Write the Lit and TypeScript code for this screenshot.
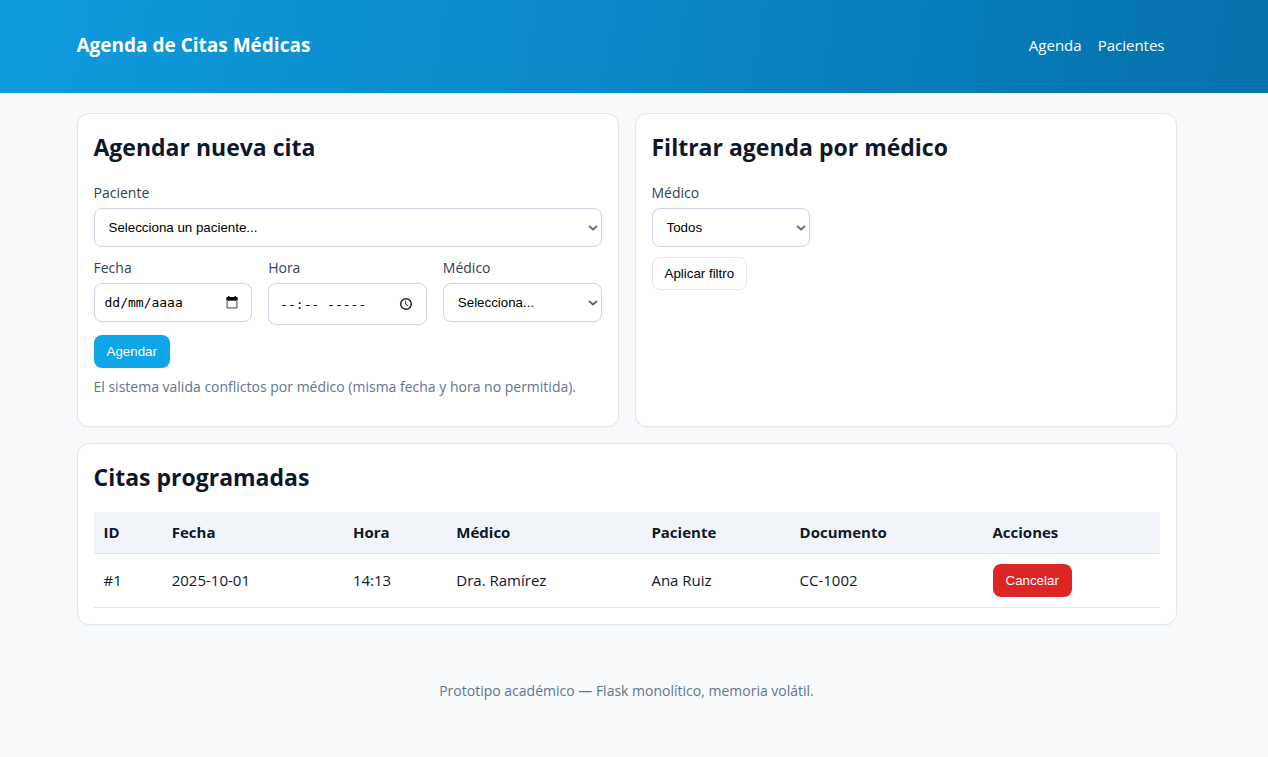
import { LitElement, html, css, svg } from "lit";
import { customElement } from "lit/decorators.js";

interface Cita {
  id: number;
  fecha: string;
  hora: string;
  medico: string;
  paciente: string;
  documento: string;
}

const CITAS: Cita[] = [
  { id: 1, fecha: "2025-10-01", hora: "14:13", medico: "Dra. Ramírez", paciente: "Ana Ruiz", documento: "CC-1002" },
];

const calendarIcon = svg`<svg viewBox="0 0 12 14" width="12" height="14" aria-hidden="true">
  <path fill="#666" fill-rule="evenodd" d="M.5 2h11v10.500H.5zM1.700 5v6.300h8.600V5z"/>
  <path fill="#000" d="M2 0h1.300v1h5.400V0H10v1h1c.4 0 .7.300.7.700V4H.3V1.700C.3 1.300.6 1 1 1h1z"/>
</svg>`;

const clockIcon = svg`<svg viewBox="0 0 14 14" width="14" height="14" aria-hidden="true">
  <circle cx="7" cy="7" r="5.300" fill="none" stroke="#222" stroke-width="1.500"/>
  <path d="M6.700 3.800v3.500l2.300 1.500" fill="none" stroke="#222" stroke-width="1"/>
</svg>`;

@customElement("app-root")
export class AppRoot extends LitElement {
  static styles = css`
    :host {
      display: block;
      min-height: 100vh;
      background: #f8fafc;
      color: #0f172a;
      font: 15px/22px "Segoe UI", "Open Sans", "Noto Sans", sans-serif;
    }
    *, *::before, *::after { box-sizing: border-box; }
    .header {
      background: linear-gradient(100deg, #0e9cdf, #0571ab);
      color: #fff;
      padding: 22px 15px 26px 0;
    }
    .bar {
      max-width: 1100px;
      min-height: 45px;
      margin: 0 auto;
      display: flex;
      align-items: center;
      justify-content: space-between;
    }
    .title { margin: 0; font-size: 19px; line-height: 28px; font-weight: 700; }
    .nav { display: flex; gap: 16px; padding-right: 12px; }
    .nav a { color: #fff; text-decoration: none; }
    .page { padding: 20px 15px 0 0; }
    .wrap {
      max-width: 1100px;
      margin: 0 auto;
      display: grid;
      grid-template-columns: 1fr 1fr;
      gap: 16px;
    }
    .card {
      min-width: 0;
      background: #fff;
      border: 1px solid #e2e8f0;
      border-radius: 12px;
      padding: 16px;
      box-shadow: 0 1px 2px rgba(0, 0, 0, 0.04);
    }
    .wide { grid-column: 1 / -1; }
    h2 { margin: 0 0 18px; font-size: 23px; line-height: 34px; font-weight: 700; }
    .form {
      display: grid;
      grid-template-columns: repeat(3, minmax(0, 1fr));
      column-gap: 16px;
      row-gap: 10px;
      align-items: start;
    }
    .full { grid-column: 1 / -1; }
    label {
      display: block;
      margin-bottom: 4px;
      font-size: 14px;
      color: #334155;
    }
    select, .field {
      width: 100%;
      height: 39px;
      border: 1px solid #cbd5e1;
      border-radius: 8px;
      background-color: #fff;
      color: #000;
    }
    select {
      display: block;
      appearance: none;
      padding: 0 20px 0 14px;
      font-family: "Liberation Sans", Arial, sans-serif;
      background-image: url("data:image/svg+xml,%3Csvg xmlns='http://www.w3.org/2000/svg' width='10' height='6' viewBox='0 0 10 6'%3E%3Cpath d='M1 1l4 3.500L9 1' fill='none' stroke='%23666' stroke-width='1.700'/%3E%3C/svg%3E");
      background-repeat: no-repeat;
      background-position: right 3px center;
    }
    .field { display: flex; align-items: center; padding: 0 13px 0 10px; }
    .field.tall { height: 42px; padding-left: 11px; }
    .field input {
      flex: 1;
      min-width: 0;
      width: 0;
      border: 0;
      padding: 0;
      outline: 0;
      background: none;
      font: 13px "DejaVu Sans Mono", monospace;
    }
    .field input::placeholder { color: #000; opacity: 1; }
    .picker { display: flex; padding: 0; border: 0; background: none; }
    .btn {
      height: 33px;
      padding: 0 12px;
      border: 1px solid transparent;
      border-radius: 8px;
      font-family: "Liberation Sans", Arial, sans-serif;
      cursor: pointer;
    }
    .primary { background: #0ea5e9; color: #fff; }
    .danger { background: #dc2626; color: #fff; display: block; }
    .plain { background: #fff; color: #000; border-color: #e2e8f0; }
    .hint { margin: 8px 0 12px; font-size: 14px; color: #64748b; }
    table { width: 100%; border-collapse: collapse; table-layout: fixed; }
    th, td { text-align: left; padding: 0 10px; border-bottom: 1px solid #e2e8f0; }
    th { height: 41px; background: #f1f5f9; font-weight: 700; }
    td { height: 54px; }
    .c-id { width: 6.400%; }
    .c-fecha { width: 17%; }
    .c-hora { width: 9.700%; }
    .c-medico { width: 18.300%; }
    .c-paciente { width: 13.900%; }
    .c-doc { width: 18.100%; }
    footer {
      padding: 55px 15px 56px 0;
      text-align: center;
      font-size: 14px;
      color: #64748b;
    }
  `;

  render() {
    return html`
      <header class="header">
        <div class="bar">
          <h1 class="title">Agenda de Citas Médicas</h1>
          <nav class="nav"><a href="#agenda">Agenda</a><a href="#pacientes">Pacientes</a></nav>
        </div>
      </header>
      <main class="page">
        <div class="wrap">
          <section class="card">
            <h2>Agendar nueva cita</h2>
            <form class="form" @submit=${this.onSubmit}>
              <div class="full">
                <label for="paciente">Paciente</label>
                <select id="paciente"><option>Selecciona un paciente...</option></select>
              </div>
              <div>
                <label for="fecha">Fecha</label>
                <div class="field">
                  <input id="fecha" type="text" placeholder="dd/mm/aaaa" />
                  <button class="picker" type="button" aria-label="Elegir fecha">${calendarIcon}</button>
                </div>
              </div>
              <div>
                <label for="hora">Hora</label>
                <div class="field tall">
                  <input id="hora" type="text" placeholder="--:-- -----" />
                  <button class="picker" type="button" aria-label="Elegir hora">${clockIcon}</button>
                </div>
              </div>
              <div>
                <label for="medico">Médico</label>
                <select id="medico"><option>Selecciona...</option></select>
              </div>
              <div class="full"><button class="btn primary" type="submit">Agendar</button></div>
            </form>
            <p class="hint">El sistema valida conflictos por médico (misma fecha y hora no permitida).</p>
          </section>
          <section class="card">
            <h2>Filtrar agenda por médico</h2>
            <form class="form" @submit=${this.onSubmit}>
              <div>
                <label for="filtro">Médico</label>
                <select id="filtro"><option>Todos</option></select>
              </div>
              <div class="full"><button class="btn plain" type="submit">Aplicar filtro</button></div>
            </form>
          </section>
          <section class="card wide">
            <h2>Citas programadas</h2>
            <table>
              <thead>
                <tr>
                  <th class="c-id">ID</th>
                  <th class="c-fecha">Fecha</th>
                  <th class="c-hora">Hora</th>
                  <th class="c-medico">Médico</th>
                  <th class="c-paciente">Paciente</th>
                  <th class="c-doc">Documento</th>
                  <th>Acciones</th>
                </tr>
              </thead>
              <tbody>
                ${CITAS.map((c) => html`
                  <tr>
                    <td>#${c.id}</td>
                    <td>${c.fecha}</td>
                    <td>${c.hora}</td>
                    <td>${c.medico}</td>
                    <td>${c.paciente}</td>
                    <td>${c.documento}</td>
                    <td><button class="btn danger" type="button">Cancelar</button></td>
                  </tr>`)}
              </tbody>
            </table>
          </section>
        </div>
      </main>
      <footer>Prototipo académico — Flask monolítico, memoria volátil.</footer>
    `;
  }

  private onSubmit(e: Event) {
    e.preventDefault();
  }
}
